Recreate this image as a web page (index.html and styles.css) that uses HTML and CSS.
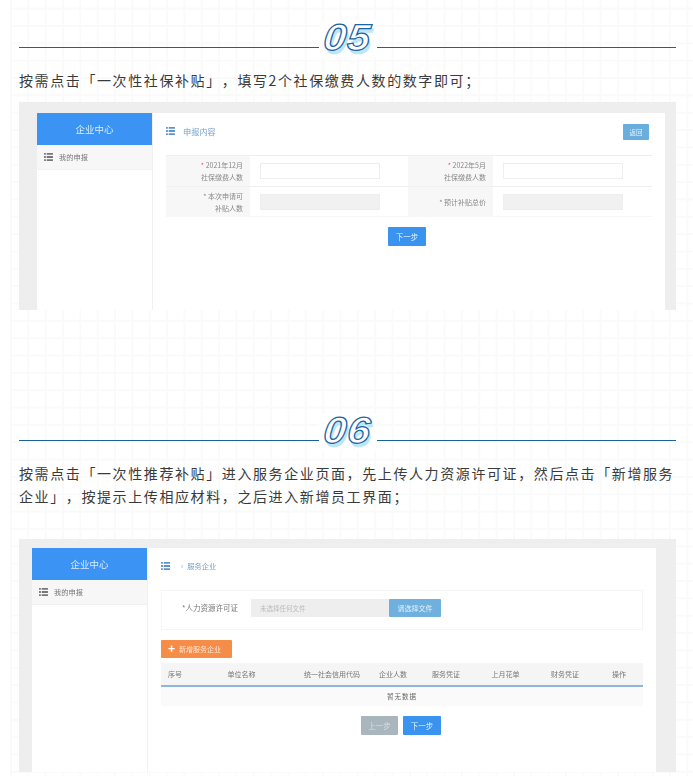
FILE: index.html
```html
<!DOCTYPE html>
<html lang="zh-CN">
<head>
<meta charset="utf-8">
<title>一次性补贴</title>
<link rel="stylesheet" href="styles.css">
</head>
<body>
<svg class="defs" width="0" height="0" aria-hidden="true">
  <symbol id="list" viewBox="0 0 10 9">
    <path d="M0 0h2v2H0zM3 0h7v2H3zM0 3.500h2v2H0zM3 3.500h7v2H3zM0 7h2v2H0zM3 7h7v2H3z"/>
  </symbol>
</svg>
<div class="page">
  <section class="step">
    <div class="heading"><span class="rule"></span><span class="num"><span class="digits">05</span></span><span class="rule"></span></div>
    <p class="para">按需点击「一次性社保补贴」，填写2个社保缴费人数的数字即可；</p>
    <div class="shot shot-a">
      <div class="panel">
        <aside class="side">
          <div class="brand">企业中心</div>
          <div class="menu"><svg class="ico ico-dark"><use href="#list"/></svg>我的申报</div>
        </aside>
        <main class="main main-a">
          <div class="top">
            <div class="crumb"><svg class="ico ico-blue"><use href="#list"/></svg><span>申报内容</span></div>
            <span class="btn btn-back">返回</span>
          </div>
          <div class="form">
            <div class="lab"><span><b>*</b> 2021年12月<br>社保缴费人数</span></div>
            <div class="val"><span class="inp"></span></div>
            <div class="lab"><span><b>*</b> 2022年5月<br>社保缴费人数</span></div>
            <div class="val"><span class="inp"></span></div>
            <div class="lab"><span><i>*</i> 本次申请可<br>补贴人数</span></div>
            <div class="val"><span class="inp inp-off"></span></div>
            <div class="lab"><span><i>*</i> 预计补贴总价</span></div>
            <div class="val"><span class="inp inp-off"></span></div>
          </div>
          <span class="btn btn-next btn-next-a">下一步</span>
        </main>
      </div>
    </div>
  </section>

  <section class="step step-b">
    <div class="heading"><span class="rule"></span><span class="num"><span class="digits">06</span></span><span class="rule"></span></div>
    <p class="para">按需点击「一次性推荐补贴」进入服务企业页面，先上传人力资源许可证，然后点击「新增服务企业」，按提示上传相应材料，之后进入新增员工界面；</p>
    <div class="shot shot-b">
      <div class="panel">
        <aside class="side">
          <div class="brand">企业中心</div>
          <div class="menu"><svg class="ico ico-dark"><use href="#list"/></svg>我的申报</div>
        </aside>
        <main class="main main-b">
          <div class="crumb crumb-b"><svg class="ico ico-blue"><use href="#list"/></svg><em>›</em><span>服务企业</span></div>
          <div class="upload">
            <span class="up-label">*人力资源许可证</span>
            <span class="up-input">未选择任何文件</span>
            <span class="up-btn">请选择文件</span>
          </div>
          <div class="btn-add"><span class="plus">+</span>新增服务企业</div>
          <div class="thead">
            <span>序号</span><span>单位名称</span><span>统一社会信用代码</span><span>企业人数</span><span>服务凭证</span><span>上月花单</span><span>财务凭证</span><span>操作</span>
          </div>
          <div class="empty">暂无数据</div>
          <div class="pager">
            <span class="btn btn-prev">上一步</span>
            <span class="btn btn-next">下一步</span>
          </div>
        </main>
      </div>
    </div>
  </section>
</div>
</body>
</html>
```

FILE: styles.css
```css
* { box-sizing: border-box; }
html, body { margin: 0; padding: 0; height: 776px; overflow: hidden; background: #fff; }
.defs { position: absolute; }
.page {
  margin-left: 10px;
  height: 776px;
  padding: 24px 17px 0 9px;
  font-family: "Noto Sans CJK SC", "Noto Sans", sans-serif;
  background-image:
    linear-gradient(#fafafa 2px, transparent 2px),
    linear-gradient(90deg, #fafafa 2px, transparent 2px);
  background-size: 17.35px 17.35px;
  background-position: 0 7.7px;
  background-repeat: repeat;
}
.step-b { margin-top: 107px; }
.heading { display: flex; height: 30px; align-items: flex-start; }
.rule { flex: 1; height: 1px; margin-top: 23px; background: #1b5f9c; }
.num {
  width: 58px;
  height: 38px;
  margin-top: -4px;
  background: #fff;
  text-align: center;
  font: italic 700 37px/36px "Liberation Sans", sans-serif;
  letter-spacing: 1px;
  color: #fff;
  -webkit-text-stroke: 1.2px #1a65a6;
  text-shadow: 2px 4px 0 #bde6f9;
}
.digits { display: inline-block; transform: skewX(-6deg) scaleX(1.1); }
.para {
  margin: 15px 0 0;
  font-size: 14px;
  line-height: 23px;
  letter-spacing: 1.6px;
  color: #3a3a3a;
  font-weight: 400;
  height: 23px;
  text-spacing-trim: space-all;
}
.step-b .para { height: 46px; }
.shot { background: #eeeeee; overflow: hidden; filter: blur(0.6px); }
.shot-a { margin-top: 10px; height: 208px; padding: 11px 11px 0 18px; }
.shot-b { margin-top: 31px; height: 233px; padding: 9px 20px 0 13px; }
.panel { display: flex; height: 100%; background: #fff; color: #666; font-size: 7px; }
.side { width: 116px; flex: none; border-right: 1px solid #f1f1f1; }
.brand {
  height: 32px;
  background: #3b93f3;
  color: #d8ecff;
  display: flex;
  align-items: center;
  justify-content: center;
  font-size: 9.500px;
}
.menu {
  height: 25px;
  padding: 0 0 1px 7px;
  display: flex;
  align-items: center;
  gap: 6px;
  background: #f7f7f7;
  border-bottom: 1px solid #f1f1f1;
  color: #777;
  font-size: 7.250px;
}
.ico { width: 9px; height: 8px; flex: none; }
.ico-dark { fill: #777; }
.ico-blue { fill: #5d93c6; }
.main { flex: 1; min-width: 0; }
.main-a { padding: 11px 16px 0 13px; }
.top { display: flex; justify-content: space-between; align-items: center; height: 16px; }
.crumb { display: flex; align-items: center; gap: 8px; color: #78a2c9; font-size: 8.200px; padding-bottom: 2px; }
.btn {
  display: inline-flex;
  align-items: center;
  justify-content: center;
  border-radius: 1px;
  color: #e6f2fb;
  font-size: 7.500px;
}
.btn-back { width: 26px; height: 16px; background: #69aedd; font-size: 6.500px; }
.form {
  margin-top: 15px;
  width: 486px;
  display: grid;
  grid-template-columns: 84px 158px 85px 159px;
  grid-auto-rows: 31px;
  border-bottom: 1px solid #f6f6f6;
  height: 62px;
}
.lab {
  background: #f7f7f7;
  display: flex;
  align-items: center;
  justify-content: flex-end;
  padding-right: 7px;
  text-align: right;
  line-height: 12px;
  border-top: 1px solid #f0f0f0;
  color: #888;
}
.lab b { color: #e8555a; font-weight: 400; }
.lab i { color: #888; font-style: normal; }
.val {
  display: flex;
  align-items: center;
  padding-left: 10px;
  border-top: 1px solid #eeeeee;
}
.inp { width: 120px; height: 16px; border: 1px solid #eee; background: #fff; }
.inp-off { background: #f1f1f1; }
.btn-next { width: 38px; height: 19px; background: #3b93f0; }
.btn-next-a { margin-left: 222px; margin-top: 10px; }
.main-b { padding: 0 13px; }
.crumb-b { height: 36px; padding-bottom: 0; gap: 0; font-size: 7.250px; }
.crumb-b em { font-style: normal; margin: 0 4px 0 11px; }
.upload {
  margin-top: 6px;
  height: 40px;
  border: 1px solid #f5f5f5;
  display: flex;
  align-items: flex-start;
  padding: 8px 0 0 20px;
}
.up-label { width: 69px; line-height: 18px; color: #777; font-size: 7.500px; }
.up-input {
  width: 138px;
  height: 18px;
  background: #eeeeee;
  padding-left: 9px;
  line-height: 18px;
  color: #bbb;
  font-size: 6.500px;
}
.up-btn {
  width: 52px;
  height: 18px;
  background: #6fb0de;
  color: #e6f2fb;
  text-align: center;
  line-height: 18px;
  font-size: 7px;
  border-radius: 1px;
}
.btn-add {
  margin-top: 10px;
  width: 71px;
  height: 18px;
  background: #f58d48;
  color: #fde3d1;
  border-radius: 1px;
  display: flex;
  align-items: center;
  padding-left: 7px;
  gap: 4px;
  font-size: 7px;
}
.plus { font: 700 12px/12px "Liberation Sans", sans-serif; color: #fff; }
.thead {
  margin-top: 5px;
  height: 24px;
  display: grid;
  grid-template-columns: 28px 105px 76px 46px 60px 59px 60px 48px;
  align-items: center;
  text-align: center;
  background: #f5f5f5;
  border-bottom: 2px solid #8db6da;
  font-size: 7px;
  color: #777;
}
.empty {
  height: 19px;
  background: #fafafa;
  text-align: center;
  line-height: 19px;
  font-size: 6.500px;
  color: #666;
  letter-spacing: 1px;
}
.pager { display: flex; gap: 5px; margin: 10px 0 0 200px; }
.btn-prev { width: 37px; height: 19px; background: #a9b6bd; color: #d8dfe3; }
```
